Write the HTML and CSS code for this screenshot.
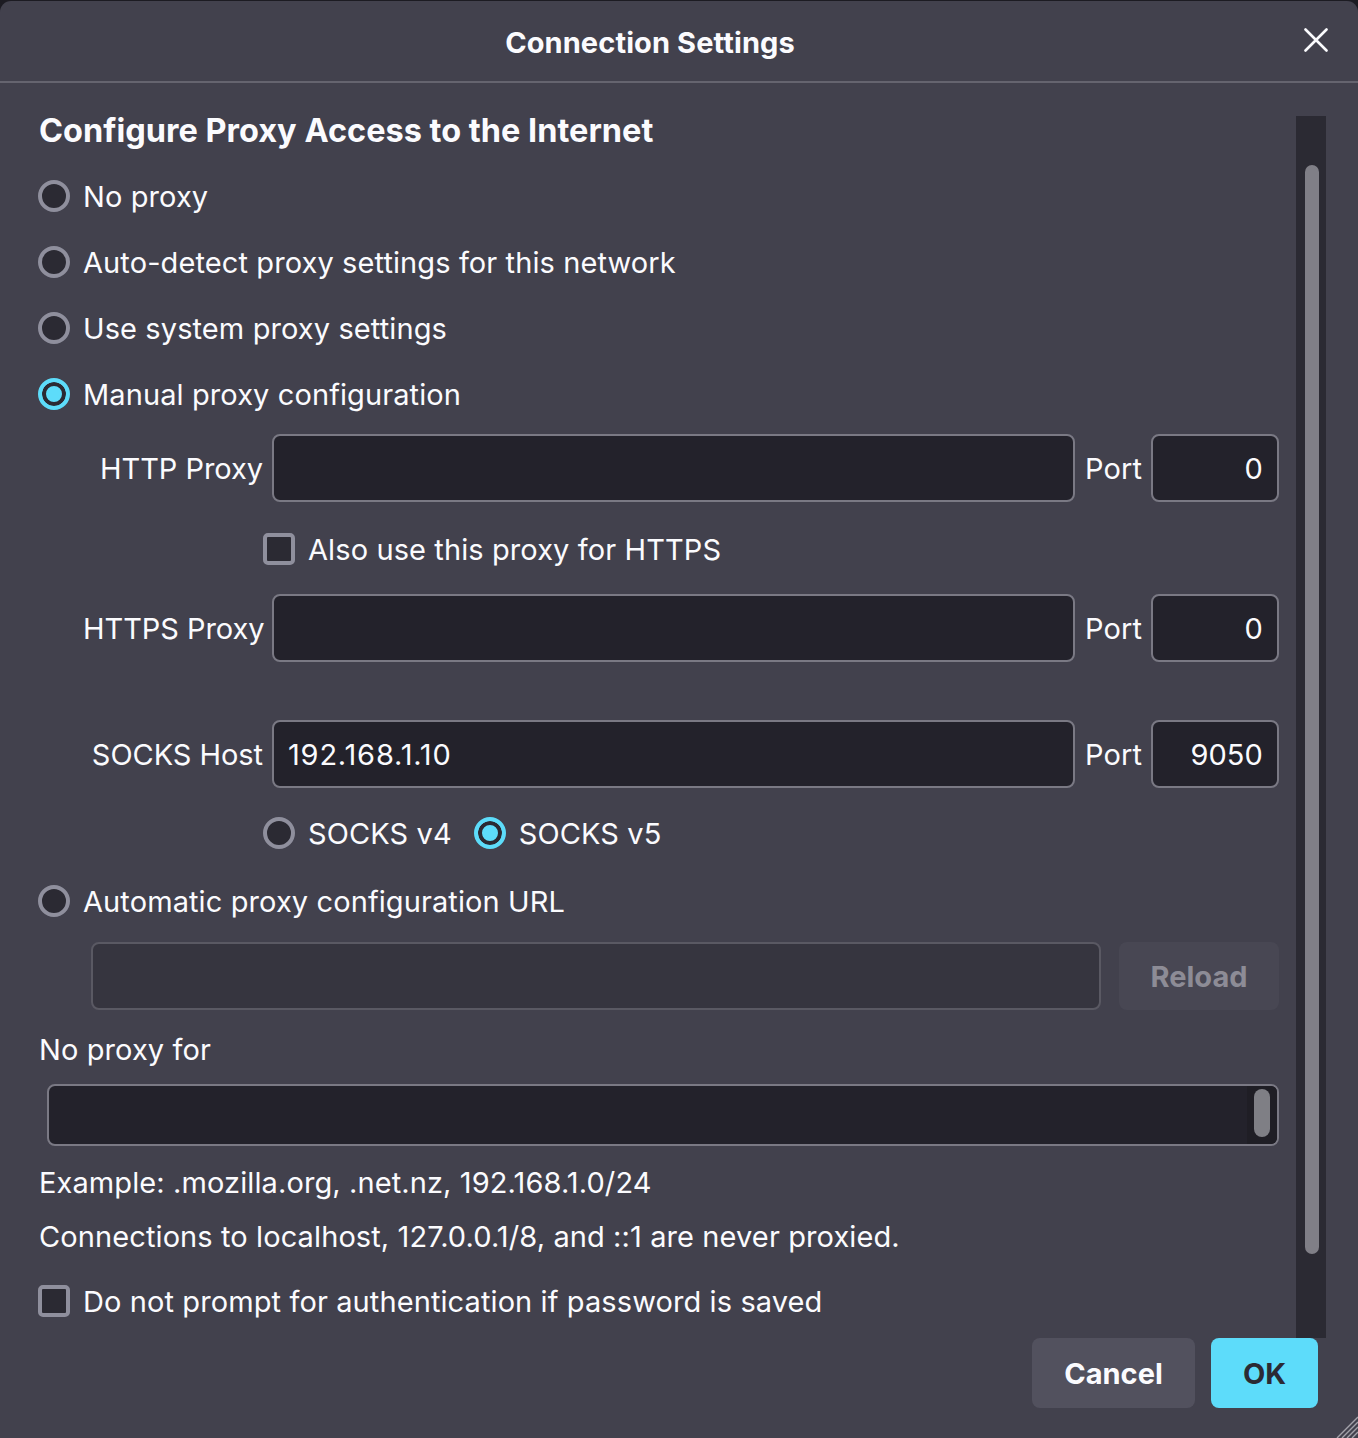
FILE: index.html
```html
<!DOCTYPE html>
<html lang="en">
<head>
<meta charset="utf-8">
<title>Connection Settings</title>
<link rel="stylesheet" href="styles.css">
</head>
<body>
<div class="dialog">
  <header class="titlebar">
    <h1 class="title">Connection Settings</h1>
    <button class="close" aria-label="Close">
      <svg width="24" height="24" viewBox="0 0 24 24"><path d="M1.5 1.5 L22.5 22.5 M22.5 1.5 L1.5 22.5" stroke="#fbfbfe" stroke-width="2.6" stroke-linecap="round" fill="none"/></svg>
    </button>
  </header>
  <div class="main">
    <div class="content">
      <h2 class="heading">Configure Proxy Access to the Internet</h2>
      <div class="option first"><span class="radio"></span>No proxy</div>
      <div class="option"><span class="radio"></span>Auto-detect proxy settings for this network</div>
      <div class="option"><span class="radio"></span>Use system proxy settings</div>
      <div class="option"><span class="radio checked"></span>Manual proxy configuration</div>

      <div class="proxy-grid">
        <span class="field-label">HTTP Proxy</span>
        <span class="input host"></span>
        <span class="port-label">Port</span>
        <span class="input port">0</span>

        <div class="sub-row check-sub"><span class="checkbox"></span>Also use this proxy for HTTPS</div>

        <span class="field-label">HTTPS Proxy</span>
        <span class="input host"></span>
        <span class="port-label">Port</span>
        <span class="input port">0</span>

        <span class="field-label socks">SOCKS Host</span>
        <span class="input host socks">192.168.1.10</span>
        <span class="port-label socks">Port</span>
        <span class="input port socks">9050</span>

        <div class="sub-row version-sub">
          <span class="sub-option"><span class="radio"></span>SOCKS v4</span>
          <span class="sub-option"><span class="radio checked"></span>SOCKS v5</span>
        </div>
      </div>

      <div class="option auto"><span class="radio"></span>Automatic proxy configuration URL</div>
      <div class="url-row">
        <span class="input url disabled"></span>
        <button class="btn reload" disabled>Reload</button>
      </div>

      <div class="text-line noproxy-label">No proxy for</div>
      <div class="textarea"><span class="ta-track"><span class="ta-thumb"></span></span></div>
      <div class="text-line example">Example: .mozilla.org, .net.nz, 192.168.1.0/24</div>
      <div class="text-line note">Connections to localhost, 127.0.0.1/8, and ::1 are never proxied.</div>
      <div class="option auth"><span class="checkbox"></span>Do not prompt for authentication if password is saved</div>
    </div>
    <div class="scrollbar"><div class="thumb"></div></div>
  </div>
  <footer class="buttons">
    <button class="btn cancel">Cancel</button>
    <button class="btn ok">OK</button>
  </footer>
  <svg class="grip" width="24" height="24" viewBox="0 0 24 24"><path d="M24 3 L3 24 M24 8 L8 24 M24 13 L13 24 M24 18 L18 24" stroke="#a3a2aa" stroke-width="1.4" fill="none"/></svg>
</div>
</body>
</html>
```
FILE: styles.css
```css
* { box-sizing: border-box; }

html, body {
  margin: 0;
  padding: 0;
}

body {
  background: #1c1b22;
  font-family: Inter, "Noto Sans", "Liberation Sans", sans-serif;
  color: #fbfbfe;
  overflow: hidden;
}

.dialog {
  position: relative;
  margin-top: 1px;
  height: 1437px;
  background: #42414d;
  border-radius: 11px 11px 0 0;
  display: flex;
  flex-direction: column;
}

/* Title bar */
.titlebar {
  height: 82px;
  display: flex;
  align-items: center;
  border-bottom: 2px solid #65646f;
}

.title {
  flex: 1;
  margin: 0;
  text-align: center;
  font-size: 29px;
  font-weight: 700;
  line-height: 1;
  padding-top: 2px;
  letter-spacing: 0.1px;
}

.close {
  width: 58px;
  height: 40px;
  background: none;
  border: 0;
  padding: 0 0 0 4px;
  display: flex;
  align-items: center;
  justify-content: flex-start;
  margin-bottom: 2px;
}

/* Main area */
.main {
  height: 1255px;
  display: flex;
  padding: 33px 32px 0 0;
  overflow: hidden;
}

.content {
  flex: 1;
  padding: 0 17px 0 39px;
  font-size: 29px;
  letter-spacing: 0.1px;
}

.scrollbar {
  width: 30px;
  height: 1222px;
  background: #2b2a33;
  padding: 49px 8px 0;
}

.thumb {
  width: 14px;
  height: 1089px;
  background: #807f87;
  border-radius: 8px;
  margin-left: 1px;
}

.heading {
  margin: 0;
  font-size: 32.5px;
  font-weight: 700;
  line-height: 30px;
  height: 30px;
  letter-spacing: 0;
}

.option {
  height: 66px;
  display: flex;
  align-items: center;
}

.option.first { margin-top: 17px; }

.radio {
  width: 32px;
  height: 32px;
  border-radius: 50%;
  border: 4px solid #8f8f9d;
  background: #2b2a33;
  margin: 0 13px 0 -1px;
  flex: none;
}

.radio.checked {
  border-color: #5ddcfa;
  background: #5ddcfa;
  box-shadow: inset 0 0 0 4px #2b2a33;
}

.checkbox {
  width: 32px;
  height: 32px;
  border-radius: 5px;
  border: 4px solid #8f8f9d;
  background: #2b2a33;
  margin: 0 13px 0 -1px;
  flex: none;
}

/* Manual proxy grid */
.proxy-grid {
  margin: 7px 0 0 44px;
  display: grid;
  grid-template-columns: 180px 1fr 56px 138px;
  align-items: center;
}

.field-label {
  text-align: right;
  white-space: nowrap;
  letter-spacing: -0.05px;
}

.port-label {
  white-space: nowrap;
}

.input {
  height: 68px;
  background: #23222b;
  border: 2px solid #7a7984;
  border-radius: 8px;
  display: flex;
  align-items: center;
  padding: 0 14px;
  font-size: 29px;
}

.input.host {
  margin: 0 10px 0 9px;
  letter-spacing: 0.8px;
}

.input.port {
  margin-left: 10px;
  justify-content: flex-end;
}

.socks,
.input.host.socks { margin-top: 58px; }

.sub-row {
  grid-column: 2 / 5;
  display: flex;
  align-items: center;
}

.sub-row .checkbox,
.sub-row .radio { margin-left: 0; }

.check-sub {
  height: 92px;
  padding-top: 2px;
}

.version-sub {
  height: 66px;
  margin-top: 12px;
}

.sub-option {
  display: flex;
  align-items: center;
  margin-right: 22px;
}

.option.auto { margin-top: 2px; }

/* URL row */
.url-row {
  margin: 8px 0 0 52px;
  display: flex;
}

.input.url {
  flex: 1;
  margin-right: 18px;
}

.input.disabled {
  background: #36353f;
  border-color: #5a5963;
}

.btn {
  font-family: inherit;
  font-size: 29px;
  font-weight: 700;
  height: 70px;
  border: 0;
  border-radius: 8px;
  padding: 0;
  color: #fbfbfe;
  background: #52515e;
}

.btn.reload {
  height: 68px;
  width: 160px;
  background: #484753;
  color: #8d8c96;
}

.text-line {
  height: 40px;
  line-height: 40px;
}

.noproxy-label { margin-top: 20px; }

.textarea {
  margin: 14px 0 0 8px;
  height: 62px;
  background: #23222b;
  border: 2px solid #7a7984;
  border-radius: 8px;
  display: flex;
  justify-content: flex-end;
  overflow: hidden;
}

.ta-track {
  width: 30px;
  background: #1f1e25;
  padding: 3px 6px 0 7px;
}

.ta-thumb {
  display: block;
  width: 16px;
  height: 48px;
  background: #7f7f85;
  border-radius: 8px;
}

.example { margin-top: 17px; }
.note { margin-top: 14px; }
.option.auth { margin-top: 11px; }

/* Footer */
.buttons {
  display: flex;
  justify-content: flex-end;
  gap: 16px;
  padding: 0 40px 0 0;
}

.btn.cancel { width: 163px; }

.btn.ok {
  width: 107px;
  background: #5ddcfa;
  color: #2b2a33;
}

.grip {
  position: absolute;
  right: 0;
  bottom: 0;
}
```
